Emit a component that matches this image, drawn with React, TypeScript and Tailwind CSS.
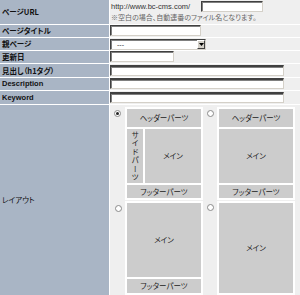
import React from "react";

const jp = { fontFamily: '"Noto Sans CJK JP", "Liberation Sans", sans-serif', fontFeatureSettings: '"palt"' } as React.CSSProperties;

const inputCls =
  "block bg-white border border-t-[#404040] border-l-[#404040] border-r-[#d4d0c8] border-b-[#d4d0c8] shadow-[inset_1px_1px_0_#808080]";

function Radio({ checked }: { checked?: boolean }) {
  return (
    <span className="flex w-[7px] h-[7px] rounded-full bg-white border border-[#8a8a8a] items-center justify-center">
      {checked && <span className="w-[3px] h-[3px] rounded-full bg-[#222]" />}
    </span>
  );
}

function Part({ children, className }: { children?: React.ReactNode; className?: string }) {
  return (
    <div className={"bg-[#cccccc] flex items-center justify-center text-[7.5px] leading-none text-[#222] " + (className || "")} style={jp}>
      {children}
    </div>
  );
}

function Label({ children, className }: { children: React.ReactNode; className?: string }) {
  return (
    <div className={"bg-[#a9b5c5] pl-[2px] flex items-center text-[7.5px] font-bold text-[#111] " + (className || "")} style={jp}>
      {children}
    </div>
  );
}

export default function App() {
  return (
    <div className="w-[300px] h-[295px] bg-white overflow-hidden">
      <div className="grid grid-cols-[109px_191px] gap-px bg-white" style={{ gridTemplateRows: "24px 12px 12px 12px 13px 12px 13px 190px" }}>
        <Label>ページURL</Label>
        <div className="bg-[#efefef] flex flex-col pt-px">
          <div className="flex items-center h-[11px]">
            <span className="text-[7.5px] text-[#333] pl-px leading-none" style={{ fontFamily: '"Liberation Sans", sans-serif' }}>
              http://www.bc-cms.com/
            </span>
            <span className={inputCls + " w-[62px] h-[11px] ml-auto mr-[38px]"} />
          </div>
          <div className="text-[7px] text-[#666] pl-px leading-[11px] whitespace-nowrap" style={jp}>
            ※空白の場合、自動連番のファイル名となります。
          </div>
        </div>

        <Label>ページタイトル</Label>
        <div className="bg-[#efefef]">
          <span className={inputCls + " w-[91px] h-[11px]"} />
        </div>

        <Label>親ページ</Label>
        <div className="bg-[#efefef] pt-px">
          <div className={inputCls + " w-[96px] h-[11px] flex items-center relative"}>
            <span className="text-[7px] text-[#333] pl-[6px] leading-none" style={{ fontFamily: '"Liberation Sans", sans-serif' }}>
              ---
            </span>
            <span className="absolute right-0 top-0 w-[8px] h-[9px] bg-[#d4d0c8] border border-t-white border-l-white border-r-[#404040] border-b-[#404040] flex items-center justify-center">
              <svg width="5" height="3" viewBox="0 0 5 3">
                <path d="M0 0H5L2.5 3Z" fill="#000" />
              </svg>
            </span>
          </div>
        </div>

        <Label>更新日</Label>
        <div className="bg-[#efefef]">
          <span className={inputCls + " w-[64px] h-[11px]"} />
        </div>

        <Label>見出し（h1タグ）</Label>
        <div className="bg-[#efefef] pt-px">
          <span className={inputCls + " w-[174px] h-[11px] border-t-2"} />
        </div>

        <Label>
          <span style={{ fontFamily: '"Liberation Sans", sans-serif' }}>Description</span>
        </Label>
        <div className="bg-[#efefef]">
          <span className={inputCls + " w-[174px] h-[11px] border-t-2"} />
        </div>

        <Label>
          <span style={{ fontFamily: '"Liberation Sans", sans-serif' }}>Keyword</span>
        </Label>
        <div className="bg-[#efefef] pt-px">
          <span className={inputCls + " w-[174px] h-[11px] border-t-2"} />
        </div>

        <Label className="font-normal">レイアウト</Label>
        <div className="bg-[#efefef] pt-[2px]">
          <div className="grid grid-cols-[15px_78px_14px_78px] gap-y-px" style={{ gridTemplateRows: "93px 94px" }}>
            <div className="pl-[4px] pt-[3px]">
              <Radio checked />
            </div>
            <div className="bg-white p-[2px] flex flex-col gap-[2px]">
              <Part className="h-[18px]">ヘッダーパーツ</Part>
              <div className="flex gap-[2px] flex-1">
                <Part className="w-[16px]">
                  <span className="[writing-mode:vertical-rl] [text-orientation:upright] leading-none tracking-[1px]" style={{ fontFeatureSettings: "normal" }}>
                    サイドパーツ
                  </span>
                </Part>
                <Part className="flex-1">メイン</Part>
              </div>
              <Part className="h-[13px]">フッターパーツ</Part>
            </div>
            <div className="pl-[4px] pt-[3px]">
              <Radio />
            </div>
            <div className="bg-white p-[2px] flex flex-col gap-[2px]">
              <Part className="h-[18px]">ヘッダーパーツ</Part>
              <Part className="flex-1">メイン</Part>
              <Part className="h-[13px]">フッターパーツ</Part>
            </div>

            <div className="pl-[5px] pt-[4px]">
              <Radio />
            </div>
            <div className="bg-white p-[2px] flex flex-col gap-[2px]">
              <Part className="flex-1">メイン</Part>
              <Part className="h-[14px]">フッターパーツ</Part>
            </div>
            <div className="pl-[4px] pt-[3px]">
              <Radio />
            </div>
            <div className="bg-white p-[2px] flex flex-col">
              <Part className="flex-1">メイン</Part>
            </div>
          </div>
        </div>
      </div>
    </div>
  );
}
